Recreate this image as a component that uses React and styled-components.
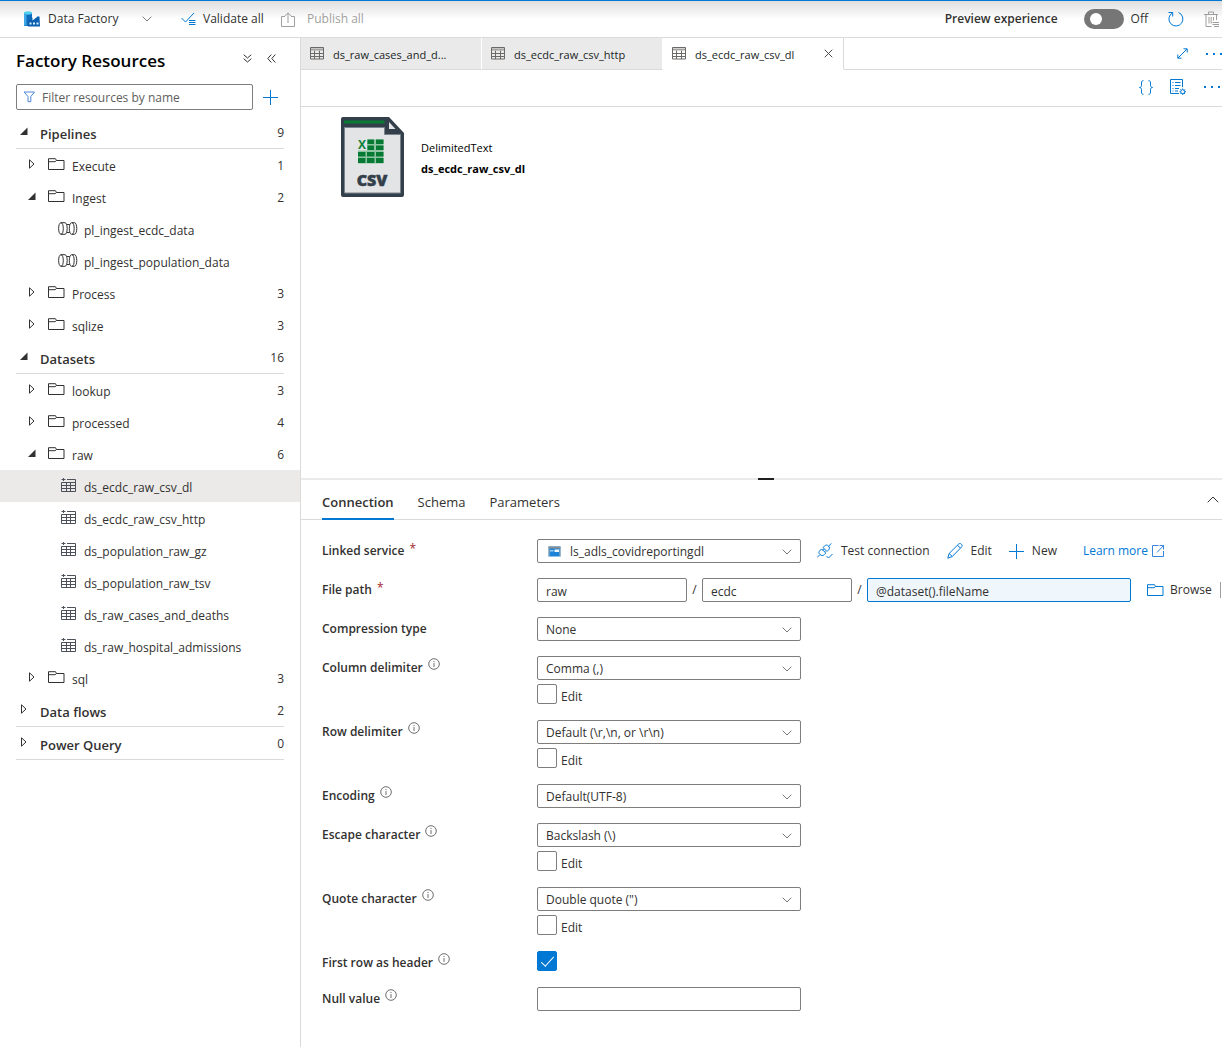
import React, { useState } from "react";
import styled, { createGlobalStyle, css } from "styled-components";

const blue = "#0078d4";
const ink = "#323130";
const line = "#dadada";

const GlobalStyle = createGlobalStyle`
  *, *::before, *::after { box-sizing: border-box; }
  body {
    margin: 0;
    background: #fff;
    color: ${ink};
    font: 12px/16px "Open Sans", "Noto Sans", sans-serif;
  }
  button, input, select { font: inherit; color: inherit; }
  svg { display: block; flex: none; }
`;

const Page = styled.div`
  min-height: 100vh;
  display: flex;
  flex-direction: column;
  overflow: hidden;
`;

const TopBar = styled.header`
  height: 38px;
  display: flex;
  align-items: center;
  padding: 0 1px 0 24px;
  border-top: 1px solid ${blue};
  border-bottom: 1px solid ${line};
  background: linear-gradient(#dedede, #fff 18px);
`;

const PlainButton = styled.button`
  display: flex;
  align-items: center;
  gap: ${(p) => p.$gap ?? 8}px;
  padding: 0;
  border: 0;
  background: none;
  white-space: nowrap;
  flex: none;
  cursor: pointer;
  &:disabled { color: #a19f9d; cursor: default; }
`;

const BrandSwitch = styled(PlainButton)`
  width: 157px;
  & > span { flex: 1; text-align: left; }
  padding-right: 29px;
`;

const ValidateButton = styled(PlainButton)`
  width: 100px;
`;

const TopRight = styled.div`
  display: flex;
  align-items: center;
  gap: 20px;
  margin-left: auto;
`;

const ToggleLabel = styled.label`
  display: flex;
  align-items: center;
  font-weight: 600;
  gap: 26px;
`;

const ToggleGroup = styled.span`
  display: flex;
  align-items: center;
  gap: 7px;
  font-weight: 400;
`;

const Toggle = styled.input`
  appearance: none;
  width: 40px;
  height: 20px;
  margin: 0;
  padding: 4px 6px;
  border-radius: 10px;
  background: #767676;
  &::before {
    content: "";
    display: block;
    width: 12px;
    height: 12px;
    border-radius: 50%;
    background: #fff;
  }
  &:checked { background: ${blue}; }
  &:checked::before { margin-left: auto; }
`;

const Body = styled.div`
  flex: 1;
  display: flex;
`;

const Sidebar = styled.aside`
  flex: none;
  width: 301px;
  border-right: 1px solid ${line};
`;

const SideHead = styled.div`
  display: flex;
  align-items: center;
  height: 46px;
  padding: 0 24px 0 16px;
`;

const SideTitle = styled.h1`
  flex: 1;
  margin: 0;
  color: #000;
  font-size: 17px;
  line-height: 24px;
  font-weight: 600;
`;

const SideActions = styled.div`
  display: flex;
  gap: 15px;
  padding-bottom: 6px;
`;

const FilterRow = styled.div`
  display: flex;
  align-items: center;
  gap: 10px;
  padding: 0 22px 6px 16px;
`;

const FilterBox = styled.label`
  flex: 1;
  display: flex;
  align-items: center;
  gap: 6px;
  height: 26px;
  padding: 0 6px;
  border: 1px solid #7f7d7b;
  border-radius: 2px;
  & input {
    flex: 1;
    min-width: 0;
    padding: 2px 0 0;
    border: 0;
    outline: 0;
    background: none;
  }
  & input::placeholder { color: #605e5c; opacity: 1; }
`;

const Tree = styled.ul`
  margin: 0;
  padding: 0;
  list-style: none;
`;

const TreeItem = styled.li`
  display: flex;
  align-items: center;
  height: 32px;
  padding: 0 16px 0 ${(p) => (p.$level === 2 ? 58 : 28)}px;
  background: ${(p) => (p.$selected ? "#ebeae9" : "transparent")};
  ${(p) =>
    p.$level === 0 &&
    css`
      height: 33px;
      margin: 0 16px;
      padding: 0 0 0 4px;
      border-bottom: 1px solid ${line};
      font-size: 13px;
      font-weight: 600;
    `}
`;

const Glyph = styled.span`
  flex: none;
  width: ${(p) => p.$w}px;
  padding-bottom: 2px;
`;

const ItemName = styled.span`
  flex: 1;
  padding-top: 3px;
`;

const Count = styled.span`
  padding-top: 1px;
  font-size: 12px;
  font-weight: 400;
`;

const Main = styled.main`
  flex: 1;
  min-width: 0;
  display: flex;
  flex-direction: column;
`;

const TabStrip = styled.div`
  display: flex;
  height: 32px;
`;

const TabGap = styled.div`
  flex: 1;
  display: flex;
  align-items: center;
  justify-content: flex-end;
  gap: 18px;
  border-bottom: 1px solid ${line};
`;

const FileTab = styled.button`
  flex: none;
  display: flex;
  align-items: center;
  gap: 9px;
  width: 181px;
  padding: 0 10px 0 9px;
  border: 0;
  border-right: 1px solid #fff;
  border-bottom: 1px solid ${line};
  background: #eaeaea;
  color: #201f1e;
  font-size: 11px;
  ${(p) =>
    p.$active &&
    css`
      border-right-color: ${line};
      border-bottom-color: #fff;
      background: #fff;
    `}
  & > span {
    flex: 1;
    text-align: left;
    padding-top: 3px;
    overflow: hidden;
    white-space: nowrap;
  }
`;

const CommandBar = styled.div`
  display: flex;
  align-items: center;
  justify-content: flex-end;
  gap: 17px;
  height: 37px;
  padding-bottom: 2px;
  padding-right: 2px;
  border-bottom: 1px solid ${line};
`;

const Preview = styled.section`
  display: flex;
  align-items: flex-start;
  gap: 17px;
  height: 371px;
  padding: 10px 40px;
`;

const PreviewText = styled.div`
  padding-top: 20px;
  color: #000;
  font-size: 11px;
  line-height: 21px;
`;

const Strong = styled.div`
  font-weight: 700;
`;

const Splitter = styled.div`
  display: flex;
  justify-content: center;
  height: 2px;
  padding-left: 9px;
  background: #eaeaea;
  &::before {
    content: "";
    width: 16px;
    background: #201f1e;
  }
`;

const PanelTabs = styled.div`
  display: flex;
  align-items: stretch;
  gap: 24px;
  height: 40px;
  padding: 0 3px 0 21px;
  border-bottom: 1px solid ${line};
`;

const PanelTab = styled.button`
  height: 40px;
  padding: 6px 0 0;
  border: 0;
  border-bottom: 2px solid ${(p) => (p.$active ? blue : "transparent")};
  background: none;
  font-size: 13px;
  font-weight: ${(p) => (p.$active ? 600 : 400)};
`;

const CollapseButton = styled(PlainButton)`
  margin-left: auto;
`;

const Form = styled.form`
  display: flex;
  flex-direction: column;
  gap: 15px;
  padding: 19px 0 24px 21px;
`;

const Row = styled.div`
  display: flex;
  align-items: flex-start;
`;

const LabelCell = styled.div`
  flex: none;
  display: flex;
  align-items: flex-start;
  gap: 5px;
  width: 215px;
  padding-top: 2px;
  font-weight: 600;
  & > label { padding-top: 2px; }
`;

const Star = styled.span`
  color: #a4262c;
  font-weight: 400;
`;

const Controls = styled.div`
  display: flex;
  flex-direction: column;
  gap: 4px;
`;

const Line = styled.div`
  display: flex;
  align-items: center;
`;

const fieldBox = css`
  height: 24px;
  margin: 0;
  border: 1px solid #7f7d7b;
  border-radius: 2px;
  background: #fff;
  outline: 0;
`;

const TextBox = styled.input`
  ${fieldBox}
  flex: none;
  width: ${(p) => (p.$short ? 150 : 264)}px;
  padding: 2px 8px 0;
  ${(p) =>
    p.$focused &&
    css`
      border-color: ${blue};
      background: #eff6fc;
    `}
`;

const Slash = styled.span`
  flex: none;
  width: 15px;
  text-align: center;
`;

const SelectWrap = styled.div`
  position: relative;
  flex: none;
  width: 264px;
  height: 24px;
  & > svg { position: absolute; top: 10px; right: 9px; pointer-events: none; }
  & > svg.lead { top: 7px; left: 11px; }
`;

const Select = styled.select`
  ${fieldBox}
  display: block;
  appearance: none;
  width: 100%;
  padding: 2px 24px 0 ${(p) => (p.$lead ? 32 : 8)}px;
`;

const CheckLabel = styled.label`
  display: flex;
  align-items: flex-start;
  gap: 4px;
  height: 21px;
  & > span { padding-top: 5px; }
`;

const CheckBox = styled.input`
  appearance: none;
  display: grid;
  place-items: center;
  width: 20px;
  height: 20px;
  margin: 0;
  border: 1px solid #7f7d7b;
  border-radius: 2px;
  background: #fff;
  &:checked { border-color: ${blue}; background: ${blue}; }
  &:checked::before {
    content: "";
    width: 13px;
    height: 6px;
    margin-top: -3px;
    border-left: 1px solid #fff;
    border-bottom: 1px solid #fff;
    rotate: -48deg;
  }
`;

const Actions = styled.div`
  display: flex;
  align-items: center;
  gap: 17px;
  padding-left: 16px;
`;

const LearnLink = styled.a`
  display: flex;
  align-items: center;
  gap: 4px;
  margin-left: 9px;
  color: ${blue};
  text-decoration: none;
  white-space: nowrap;
`;

const Divider = styled.span`
  width: 1px;
  height: 16px;
  margin-left: -9px;
  background: #a19f9d;
`;

const Svg = ({ w, h = w, stroke = ink, children, ...rest }) => (
  <svg width={w} height={h} viewBox={`0 0 ${w} ${h}`} fill="none" stroke={stroke} aria-hidden="true" {...rest}>
    {children}
  </svg>
);

const FactoryIcon = () => (
  <Svg w={17} h={16} stroke="none">
    <path d="M0 2v13h8V2z" fill="#0f6cbd" />
    <ellipse cx="4" cy="2" rx="4" ry="1.700" fill="#50d0f0" />
    <path d="M0 2.500v12h2.500V3.500C1.300 3.300 0 3 0 2.500z" fill="#3fa9e8" />
    <path d="M4 15.500V10l4.500-3.500v3L13 6v-.5h2.500l.5 10z" fill="#0a5fb0" />
    <path d="M5.500 11.500h2v2h-2zM9 11.500h2v2H9zM12.500 11.500h2v2h-2z" fill="#d8f2ff" />
  </Svg>
);

const ChevronDown = ({ color = "#7a7876" }) => (
  <Svg w={10} h={6} stroke={color}><path d="M.7.7 5 5 9.300.7" /></Svg>
);

const ValidateIcon = () => (
  <Svg w={15} h={14} stroke={blue}>
    <path d="m.5 6 4 4L13 1M8 8.500h6.500M8 10.500h6.500M8 12.500h6.500" />
  </Svg>
);

const PublishIcon = () => (
  <Svg w={14} h={15} stroke="#a19f9d">
    <path d="M4 4.500H.5v10h13v-10H10M7 11V1M3.800 4 7 .8 10.200 4" />
  </Svg>
);

const RefreshIcon = () => (
  <Svg w={16} h={17} stroke={blue}>
    <path d="M10.500 1.500a7 7 0 1 1-6 .4" />
    <path d="M.5 1.500h4.200v4" />
  </Svg>
);

const TrashIcon = () => (
  <Svg w={17} h={17} stroke="#a09e9c">
    <path d="M0 3.500h14M4.500 3V1h5v2M2 4v11.500h5.500M12.500 4v5M5 6v6.500M7.200 6v6.500M9.500 6v3.500M8.500 11.500H15M8.500 13.500H15M10 15.500h5" />
  </Svg>
);

const DoubleDown = () => (
  <Svg w={9} h={9}><path d="m.7.700 3.800 3.300L8.300.7M.7 4.700 4.500 8l3.800-3.300" /></Svg>
);

const DoubleLeft = () => (
  <Svg w={9} h={9}><path d="M4.300.500.800 4.500l3.500 4M8.300.500l-3.500 4 3.500 4" /></Svg>
);

const FilterIcon = () => (
  <Svg w={13} h={12} stroke="#4a86d8"><path d="M1 1h10.500L7.800 5.500v5.200H5V5.500z" /></Svg>
);

const PlusIcon = () => (
  <Svg w={15} stroke={blue}><path d="M7.500 0v15M0 7.500h15" /></Svg>
);

const ArrowIcon = ({ open }) =>
  open ? (
    <Svg w={8} h={9} stroke="none"><path d="M7.500.5v7.500H0z" fill={ink} /></Svg>
  ) : (
    <Svg w={8} h={10}><path d="M1.500.8v8.400L6 5z" /></Svg>
  );

const FolderIcon = ({ color = ink }) => (
  <Svg w={17} h={13} stroke={color}><path d="M.5.700v10.800h15.500V2.500H8.500L7.500.700zM.5 3.700h6.500l1.500-1.200" /></Svg>
);

const PipelineIcon = () => (
  <Svg w={20} h={13}>
    <path d="M3 .7C1.600.7.600 3.300.600 6.500s1 5.800 2.400 5.800M3 .7c1.400 0 2.300 2.600 2.300 5.800S4.400 12.300 3 12.300" />
    <path d="M3 .7h4c1.200 0 2.200 2.600 2.200 5.800s-1 5.800-2.200 5.800H3M8.700 2.500h3M8.700 10.500h3" />
    <path d="M16.500.7h-3c-1.200 0-2.200 2.600-2.200 5.800s1 5.800 2.200 5.800h3" />
    <path d="M16.500.7c1.300 0 2.300 2.600 2.300 5.800s-1 5.800-2.300 5.800M14 .7c1.300 0 2.200 2.600 2.200 5.800s-.900 5.800-2.200 5.800" />
  </Svg>
);

const DatasetIcon = () => (
  <Svg w={15} h={14} stroke="#4b5059">
    <path d="M.5 1.500h4M2.500 0v3M6 1.500h8.500M.5 4.500h14M.5 4.500v9h14v-12M.5 7.500h14M.5 10.500h14M5.500 4.500v9M9.500 4.500v9" />
  </Svg>
);

const TableIcon = () => (
  <Svg w={14} h={13} stroke="#6b6967">
    <path d="M.5.500h13v11.500H.5zM1 6.500h12M1 9.500h12M4.500 3.500V12M9.500 3.500V12" />
    <path d="M1 2.500h12" strokeWidth="2" stroke="#a5a3a1" />
  </Svg>
);

const CloseIcon = () => (
  <Svg w={9} stroke="#4f4d4b"><path d="m.7.700 7.600 7.600M8.300.700.700 8.300" /></Svg>
);

const ExpandIcon = () => (
  <Svg w={11} stroke={blue}><path d="M1 10 10 1M6.500.800h3.700v3.700M.8 6.500v3.700h3.700" /></Svg>
);

const MoreIcon = () => (
  <Svg w={16} h={4} stroke="none"><path d="M0 1h2v2H0zM7 1h2v2H7zM14 1h2v2h-2z" fill={blue} /></Svg>
);

const BracesIcon = () => (
  <Svg w={14} h={15} stroke={blue}>
    <path d="M4.500.700C2.800.700 2.500 1.500 2.500 3v2.300c0 1.400-.7 2.200-2 2.200 1.300 0 2 .8 2 2.200V12c0 1.500.3 2.300 2 2.300M9.500.700c1.700 0 2 .8 2 2.300v2.300c0 1.400.7 2.200 2 2.200-1.300 0-2 .8-2 2.200V12c0 1.500-.3 2.300-2 2.300" />
  </Svg>
);

const ListGearIcon = () => (
  <Svg w={17} h={17} stroke={blue}>
    <path d="M9 14.500H.5V.500h12V8M2.500 3.500h1M5 3.500h5.500M2.500 6.500h1M5 6.500h5.500M2.500 9.500h1M5 9.500h4M2.500 12h1M5 12h3" />
    <circle cx="12.700" cy="12.700" r="2" />
    <path d="M12.700 9.500v1.200M12.700 14.700v1.300M9.500 12.700h1.200M14.700 12.700h1.300M10.400 10.400l.9.900M14.100 14.100l.9.900M15 10.400l-.9.900M11.300 14.100l-.9.900" />
  </Svg>
);

const CsvIcon = () => (
  <Svg w={63} h={80} stroke="none">
    <path d="M2 0h46l15 16v62a2 2 0 0 1-2 2H2a2 2 0 0 1-2-2V2a2 2 0 0 1 2-2z" fill="#333f4b" />
    <path d="M3.500 10.500h40v7h16v58.500h-56z" fill="#e3e4e5" stroke="#7a838b" />
    <path d="M3 3.500h40.500v3H3z" fill="#0b7a34" />
    <path d="M48 5v7h6.500z" fill="#e3e4e5" />
    <path d="M17 33.500h9v-11h16.500v24H17z" fill="#8fc4a2" />
    <path d="M26.500 22.500H33V27h-6.500zM35 22.500h7.500V27H35zM26.500 28.500H33V33h-6.500zM35 28.500h7.500V33H35zM17 35h7.500v4.500H17zM26 35h7.500v4.500H26zM35 35h7.500v4.500H35zM17 41h7.500v5H17zM26 41h7.500v5H26zM35 41h7.500v5H35z" fill="#067a35" />
    <text x="17" y="32" fontSize="12" fontWeight="700" fill="#0b8039">X</text>
    <text x="31" y="69" fontSize="16" fontWeight="800" textAnchor="middle" fill="#333f4b" stroke="#333f4b" strokeWidth=".5">CSV</text>
  </Svg>
);

const ChevronUp = () => (
  <Svg w={12} h={7}><path d="M.7 6.300 6 1l5.300 5.300" /></Svg>
);

const StorageIcon = () => (
  <Svg w={13} h={11} stroke="none" className="lead">
    <path d="M.5.500h12v10H.5z" fill="#1b84d8" />
    <path d="M.5.500h12v2H.5z" fill="#8b8f94" />
    <path d="M6.500 3.500H11V6H6.500z" fill="#eef7fc" />
    <path d="M2 4h3.500v1.500H2z" fill="#9fd0f2" />
    <path d="M.5 2.500h1v8h-1zM11.500 2.500h1v8h-1z" fill="#a9adb2" />
  </Svg>
);

const PlugIcon = () => (
  <Svg w={16} h={16} stroke={blue}>
    <path d="m0 14.500 3-3M11.500 3.200 14.500.300M3 11.500c-1.600-1.500-1.300-2.800.2-4.200L4.600 5.900l4.200 4.200-1.400 1.400c-1.400 1.400-2.800 1.500-4.400 0zM6 4.500l1.400-1.300c1.400-1.400 2.700-1.600 4.100-.2s1.200 2.800-.2 4.200L10 8.500zM6 7.300l1.300-1.300M7.500 8.800l1.300-1.300M9.500 13l2 2 4-4" />
  </Svg>
);

const PencilIcon = () => (
  <Svg w={16} stroke={blue}>
    <path d="m.8 15.200 1.300-4.700L11.800.9c.8-.6 1.800-.5 2.600.3s.9 1.800.3 2.600L5.300 13.500zM2.100 10.500l3.200 3M10.500 2.200l3 3" />
  </Svg>
);

const ExternalIcon = () => (
  <Svg w={12} stroke="#3b86dd"><path d="M6.500.500H.5v11h11V6M7.500.500h4v4M5 7.500l6.500-7" /></Svg>
);

const InfoIcon = () => (
  <Svg w={12} stroke="#605e5c">
    <circle cx="6" cy="6" r="5.300" strokeWidth=".9" />
    <path d="M6 5v4M6 3v1" strokeWidth=".9" />
  </Svg>
);

const tree = [
  { level: 0, name: "Pipelines", count: 9, open: true },
  { level: 1, name: "Execute", count: 1 },
  { level: 1, name: "Ingest", count: 2, open: true },
  { level: 2, name: "pl_ingest_ecdc_data", kind: "pipeline" },
  { level: 2, name: "pl_ingest_population_data", kind: "pipeline" },
  { level: 1, name: "Process", count: 3 },
  { level: 1, name: "sqlize", count: 3 },
  { level: 0, name: "Datasets", count: 16, open: true },
  { level: 1, name: "lookup", count: 3 },
  { level: 1, name: "processed", count: 4 },
  { level: 1, name: "raw", count: 6, open: true },
  { level: 2, name: "ds_ecdc_raw_csv_dl", selected: true },
  { level: 2, name: "ds_ecdc_raw_csv_http" },
  { level: 2, name: "ds_population_raw_gz" },
  { level: 2, name: "ds_population_raw_tsv" },
  { level: 2, name: "ds_raw_cases_and_deaths" },
  { level: 2, name: "ds_raw_hospital_admissions" },
  { level: 1, name: "sql", count: 3 },
  { level: 0, name: "Data flows", count: 2 },
  { level: 0, name: "Power Query", count: 0 },
];

const TreeNode = ({ level, name, count, open, kind, selected }) => (
  <TreeItem $level={level} $selected={selected}>
    {level < 2 && <Glyph $w={20}><ArrowIcon open={open} /></Glyph>}
    {level === 1 && <Glyph $w={24}><FolderIcon /></Glyph>}
    {level === 2 && (
      <Glyph $w={26}>{kind === "pipeline" ? <PipelineIcon /> : <DatasetGlyph />}</Glyph>
    )}
    <ItemName>{name}</ItemName>
    {count !== undefined && <Count>{count}</Count>}
  </TreeItem>
);

const DatasetPad = styled.span`
  display: block;
  padding-left: 3px;
`;

const DatasetGlyph = () => <DatasetPad><DatasetIcon /></DatasetPad>;

const Field = ({ id, label, required, info, children }) => (
  <Row>
    <LabelCell>
      <label htmlFor={id}>{label}</label>
      {required && <Star>*</Star>}
      {info && <InfoIcon />}
    </LabelCell>
    <Controls>{children}</Controls>
  </Row>
);

const Dropdown = ({ id, value, lead }) => (
  <SelectWrap>
    <Select id={id} $lead={lead} defaultValue={value}>
      <option>{value}</option>
    </Select>
    {lead && <StorageIcon />}
    <ChevronDown />
  </SelectWrap>
);

const EditCheck = () => (
  <CheckLabel>
    <CheckBox type="checkbox" />
    <span>Edit</span>
  </CheckLabel>
);

export default function App() {
  const [panel, setPanel] = useState("Connection");
  return (
    <Page>
      <GlobalStyle />
      <TopBar>
        <BrandSwitch $gap={7}><FactoryIcon /><span>Data Factory</span><ChevronDown /></BrandSwitch>
        <ValidateButton $gap={7}><ValidateIcon />Validate all</ValidateButton>
        <PlainButton disabled $gap={12}><PublishIcon />Publish all</PlainButton>
        <TopRight>
          <ToggleLabel>
            Preview experience
            <ToggleGroup><Toggle type="checkbox" role="switch" />Off</ToggleGroup>
          </ToggleLabel>
          <PlainButton aria-label="Refresh"><RefreshIcon /></PlainButton>
          <PlainButton aria-label="Discard all"><TrashIcon /></PlainButton>
        </TopRight>
      </TopBar>
      <Body>
        <Sidebar>
          <SideHead>
            <SideTitle>Factory Resources</SideTitle>
            <SideActions>
              <PlainButton aria-label="Expand all"><DoubleDown /></PlainButton>
              <PlainButton aria-label="Collapse pane"><DoubleLeft /></PlainButton>
            </SideActions>
          </SideHead>
          <FilterRow>
            <FilterBox>
              <FilterIcon />
              <input type="text" aria-label="Filter resources" placeholder="Filter resources by name" />
            </FilterBox>
            <PlainButton aria-label="Add resource"><PlusIcon /></PlainButton>
          </FilterRow>
          <Tree>
            {tree.map((node) => <TreeNode key={node.name} {...node} />)}
          </Tree>
        </Sidebar>
        <Main>
          <TabStrip>
            <FileTab><TableIcon /><span>ds_raw_cases_and_d...</span></FileTab>
            <FileTab><TableIcon /><span>ds_ecdc_raw_csv_http</span></FileTab>
            <FileTab $active><TableIcon /><span>ds_ecdc_raw_csv_dl</span><CloseIcon /></FileTab>
            <TabGap>
              <PlainButton aria-label="Full screen"><ExpandIcon /></PlainButton>
              <PlainButton aria-label="More tabs"><MoreIcon /></PlainButton>
            </TabGap>
          </TabStrip>
          <CommandBar>
            <PlainButton aria-label="View code"><BracesIcon /></PlainButton>
            <PlainButton aria-label="Properties"><ListGearIcon /></PlainButton>
            <PlainButton aria-label="More commands"><MoreIcon /></PlainButton>
          </CommandBar>
          <Preview>
            <CsvIcon />
            <PreviewText>
              <div>DelimitedText</div>
              <Strong>ds_ecdc_raw_csv_dl</Strong>
            </PreviewText>
          </Preview>
          <Splitter />
          <PanelTabs>
            {["Connection", "Schema", "Parameters"].map((name) => (
              <PanelTab key={name} $active={panel === name} onClick={() => setPanel(name)}>{name}</PanelTab>
            ))}
            <CollapseButton aria-label="Collapse panel"><ChevronUp /></CollapseButton>
          </PanelTabs>
          <Form onSubmit={(e) => e.preventDefault()}>
            <Field id="linked" label="Linked service" required>
              <Line>
                <Dropdown id="linked" value="ls_adls_covidreportingdl" lead />
                <Actions>
                  <PlainButton type="button"><PlugIcon />Test connection</PlainButton>
                  <PlainButton type="button"><PencilIcon />Edit</PlainButton>
                  <PlainButton type="button"><PlusIcon />New</PlainButton>
                  <LearnLink href="#learn">Learn more<ExternalIcon /></LearnLink>
                </Actions>
              </Line>
            </Field>
            <Field id="path" label="File path" required>
              <Line>
                <TextBox id="path" $short defaultValue="raw" />
                <Slash>/</Slash>
                <TextBox aria-label="Directory" $short defaultValue="ecdc" />
                <Slash>/</Slash>
                <TextBox aria-label="File name" $focused defaultValue="@dataset().fileName" />
                <Actions>
                  <PlainButton type="button" $gap={6}><FolderIcon color={blue} />Browse</PlainButton>
                  <Divider />
                </Actions>
              </Line>
            </Field>
            <Field id="compression" label="Compression type">
              <Dropdown id="compression" value="None" />
            </Field>
            <Field id="column" label="Column delimiter" info>
              <Dropdown id="column" value="Comma (,)" />
              <EditCheck />
            </Field>
            <Field id="row" label="Row delimiter" info>
              <Dropdown id="row" value="Default (\r,\n, or \r\n)" />
              <EditCheck />
            </Field>
            <Field id="encoding" label="Encoding" info>
              <Dropdown id="encoding" value="Default(UTF-8)" />
            </Field>
            <Field id="escape" label="Escape character" info>
              <Dropdown id="escape" value="Backslash (\)" />
              <EditCheck />
            </Field>
            <Field id="quote" label="Quote character" info>
              <Dropdown id="quote" value={'Double quote (")'} />
              <EditCheck />
            </Field>
            <Field id="header" label="First row as header" info>
              <CheckLabel as="div"><CheckBox id="header" type="checkbox" defaultChecked /></CheckLabel>
            </Field>
            <Field id="null" label="Null value" info>
              <TextBox id="null" type="text" />
            </Field>
          </Form>
        </Main>
      </Body>
    </Page>
  );
}
